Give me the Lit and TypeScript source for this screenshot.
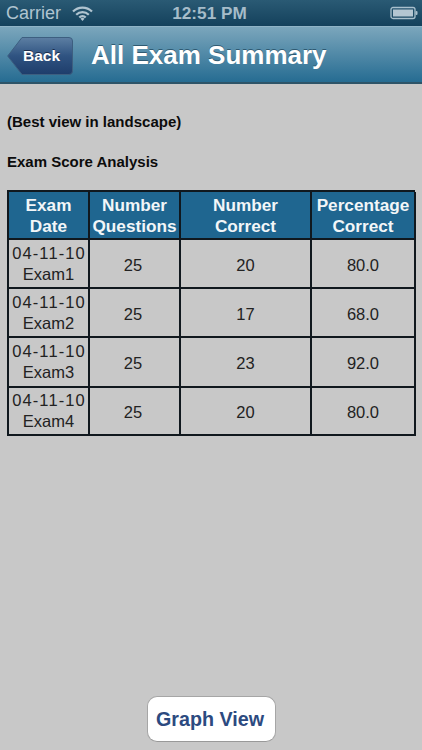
import { LitElement, html, css } from "lit";
import { customElement } from "lit/decorators.js";

const rows = [
  ["Exam1", "25", "20", "80.0"],
  ["Exam2", "25", "17", "68.0"],
  ["Exam3", "25", "23", "92.0"],
  ["Exam4", "25", "20", "80.0"],
];

@customElement("app-root")
export class AppRoot extends LitElement {
  static styles = css`
    :host { display: block; width: 422px; height: 750px; font-family: "Liberation Sans", Arial, sans-serif; background: #c8c8c8; color: #111; }
    .page { height: 750px; display: flex; flex-direction: column; overflow: hidden; }
    .status { height: 26px; box-sizing: border-box; padding: 0 4px 0 6px; display: grid; grid-template-columns: 1fr auto 1fr; align-items: center; background: linear-gradient(#2a5a74, #14415c); color: #b0c4d0; font-size: 18px; font-weight: 400; }
    .status .left { display: flex; align-items: center; gap: 11px; }
    .status .time { font-weight: 700; color: #a6bcc9; font-size: 17.2px; margin-right: 5px; }
    .status .right { display: flex; justify-content: flex-end; }
    .nav { height: 58px; box-sizing: border-box; border-top: 1px solid #8fb3c6; border-bottom: 2px solid #2e5468; background: linear-gradient(#7ba6bc, #266c92); display: flex; align-items: center; padding: 2px 0 0 7px; gap: 18px; }
    .back { position: relative; width: 66px; height: 38px; display: flex; align-items: center; justify-content: center; padding-left: 3px; box-sizing: border-box; color: #fff; font-weight: 700; font-size: 15.5px; text-shadow: 0 -1px 0 #1b2d4c; }
    .back svg { position: absolute; left: 0; top: 0; }
    .back span { position: relative; }
    h1 { margin: 0; color: #fff; font-size: 26px; font-weight: 700; text-shadow: 0 -1px 0 #2f5a72; }
    .content { flex: 1; display: flex; flex-direction: column; padding: 28px 7px 0; }
    .note { font-size: 15px; font-weight: 700; line-height: 20px; color: #0c0c0c; }
    .sub { margin-top: 20px; }
    .table { margin-top: 18px; display: grid; grid-template-columns: 81px 91px 131px 104px; grid-template-rows: 48px 49px 49px 50px 48px; width: 408px; box-sizing: border-box; border-top: 2px solid #10181e; border-left: 2px solid #10181e; }
    .cell { box-sizing: border-box; border-right: 2px solid #10181e; border-bottom: 2px solid #10181e; display: flex; align-items: center; justify-content: center; text-align: center; font-size: 16.5px; line-height: 21px; color: #222; }
    .date { letter-spacing: 1.1px; margin-right: -1px; }
    .num { padding-top: 3px; }
    .q { padding-right: 3px; }
    .head { background: #1f6690; color: #f2f6f8; font-weight: 700; font-size: 17.2px; padding-top: 2px; }
    .foot { margin-top: auto; display: flex; justify-content: center; padding-bottom: 8px; }
    .btn { width: 129px; height: 46px; box-sizing: border-box; padding-right: 2px; background: #fff; border: 1px solid #a6a6a6; border-bottom-color: #999; border-radius: 10px; display: flex; align-items: center; justify-content: center; color: #2c4a80; font-weight: 700; font-size: 19.7px; }
  `;

  render() {
    return html`<div class="page">
      <div class="status">
        <div class="left"><span>Carrier</span>
          <svg width="21" height="15" viewBox="0 0 21 15" fill="none" stroke="#b0c4d0" stroke-width="2.2">
            <path d="M1 5.5a13.5 13.5 0 0 1 19 0"/><path d="M4.2 8.7a9 9 0 0 1 12.6 0"/><path d="M7.3 11.5a4.5 4.5 0 0 1 6.4 0"/>
            <path d="M10.5 15l-2-2.2a2.8 2.8 0 0 1 4 0z" fill="#b0c4d0" stroke="none"/>
          </svg>
        </div>
        <div class="time">12:51 PM</div>
        <div class="right">
          <svg width="28" height="14" viewBox="0 0 28 14">
            <rect x="1" y="1.5" width="24" height="11" rx="2" fill="none" stroke="#a9c0cd" stroke-width="1.3"/>
            <rect x="3" y="3.5" width="20" height="7" fill="#b4c6d2"/>
            <rect x="25.5" y="5" width="2" height="4" rx="1" fill="#a9c0cd"/>
          </svg>
        </div>
      </div>
      <div class="nav">
        <div class="back">
          <svg width="66" height="38" viewBox="0 0 66 38">
            <defs><linearGradient id="b" x1="0" y1="0" x2="0" y2="1"><stop offset="0" stop-color="#5d7fa3"/><stop offset="0.5" stop-color="#2f5381"/><stop offset="1" stop-color="#1e3d6b"/></linearGradient></defs>
            <path d="M15 .5H62a3.5 3.5 0 0 1 3.5 3.5V34a3.5 3.5 0 0 1-3.5 3.5H15L.7 19z" fill="url(#b)" stroke="#3d5f80" stroke-width="1"/>
          </svg>
          <span>Back</span>
        </div>
        <h1>All Exam Summary</h1>
      </div>
      <div class="content">
        <div class="note">(Best view in landscape)</div>
        <div class="note sub">Exam Score Analysis</div>
        <div class="table">
          <div class="cell head">Exam<br />Date</div>
          <div class="cell head">Number<br />Questions</div>
          <div class="cell head">Number<br />Correct</div>
          <div class="cell head">Percentage<br />Correct</div>
          ${rows.map(
            (r) => html`
              <div class="cell"><div><div class="date">04-11-10</div>${r[0]}</div></div>
              <div class="cell num q">${r[1]}</div>
              <div class="cell num">${r[2]}</div>
              <div class="cell num">${r[3]}</div>
            `
          )}
        </div>
        <div class="foot"><div class="btn">Graph View</div></div>
      </div>
    </div>`;
  }
}
